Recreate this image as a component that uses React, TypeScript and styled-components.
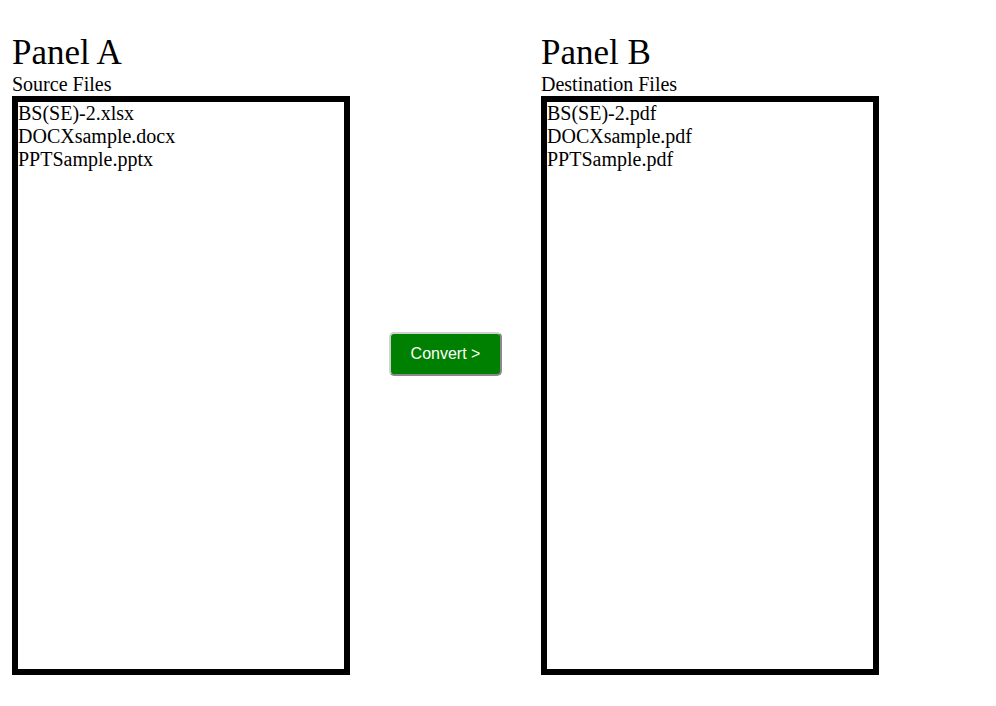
import styled, { createGlobalStyle } from "styled-components";

const GlobalStyle = createGlobalStyle`
  body {
    margin: 0;
    background: #ffffff;
    font-family: "Liberation Serif", "Times New Roman", serif;
    color: #000000;
  }
`;

const Page = styled.div`
  display: flex;
  align-items: center;
  gap: 39px;
  padding: 33px 12px 0;
`;

const Panel = styled.section`
  display: flex;
  flex-direction: column;
`;

const Title = styled.h1`
  margin: 0;
  font-size: 35px;
  font-weight: normal;
  line-height: 40px;
`;

const Label = styled.div`
  font-size: 20px;
  line-height: 23px;
`;

const FileBox = styled.ul`
  list-style: none;
  margin: 0;
  padding: 0;
  width: 326px;
  height: 567px;
  border: 6px solid #000000;
  font-size: 20px;
  line-height: 23px;
`;

const FileItem = styled.li`
  margin: 0;
`;

const ConvertButton = styled.button`
  width: 113px;
  height: 44px;
  padding: 0;
  background: #008000;
  color: #ffffff;
  font-family: "Liberation Sans", Arial, sans-serif;
  font-size: 16px;
  border-radius: 5px;
  border: 2px solid;
  border-color: #d0d0d0 #8a8a8a #8a8a8a #d0d0d0;
  cursor: pointer;
`;

const source = ["BS(SE)-2.xlsx", "DOCXsample.docx", "PPTSample.pptx"];
const destination = ["BS(SE)-2.pdf", "DOCXsample.pdf", "PPTSample.pdf"];

const FilePanel = ({ title, label, files }: { title: string; label: string; files: string[] }) => (
  <Panel>
    <Title>{title}</Title>
    <Label>{label}</Label>
    <FileBox>
      {files.map((f) => (
        <FileItem key={f}>{f}</FileItem>
      ))}
    </FileBox>
  </Panel>
);

export default function App() {
  return (
    <>
      <GlobalStyle />
      <Page>
        <FilePanel title="Panel A" label="Source Files" files={source} />
        <ConvertButton>Convert &gt;</ConvertButton>
        <FilePanel title="Panel B" label="Destination Files" files={destination} />
      </Page>
    </>
  );
}
